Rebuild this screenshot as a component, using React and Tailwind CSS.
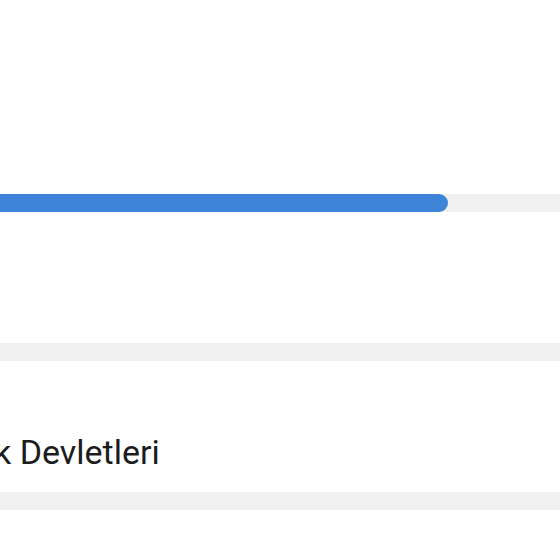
export default function App() {
  return (
    <div className="w-[560px] h-[560px] overflow-hidden bg-white" style={{ fontFamily: 'Roboto, "Noto Sans", sans-serif' }}>
      <div className="h-[194px]" />
      <div className="h-[18px] w-full bg-[#f0f0f0]">
        <div className="h-full w-[448px] rounded-r-full bg-[#3d84d8]" />
      </div>
      <div className="h-[131px]" />
      <div className="h-[18px] bg-[#f0f0f0]" />
      <div className="h-[131px] pt-[72px] overflow-hidden">
        <div className="-ml-[6px] text-[34px] leading-[38px] text-[#1c1c1c] whitespace-nowrap">k Devletleri</div>
      </div>
      <div className="h-[18px] bg-[#f0f0f0]" />
    </div>
  );
}
